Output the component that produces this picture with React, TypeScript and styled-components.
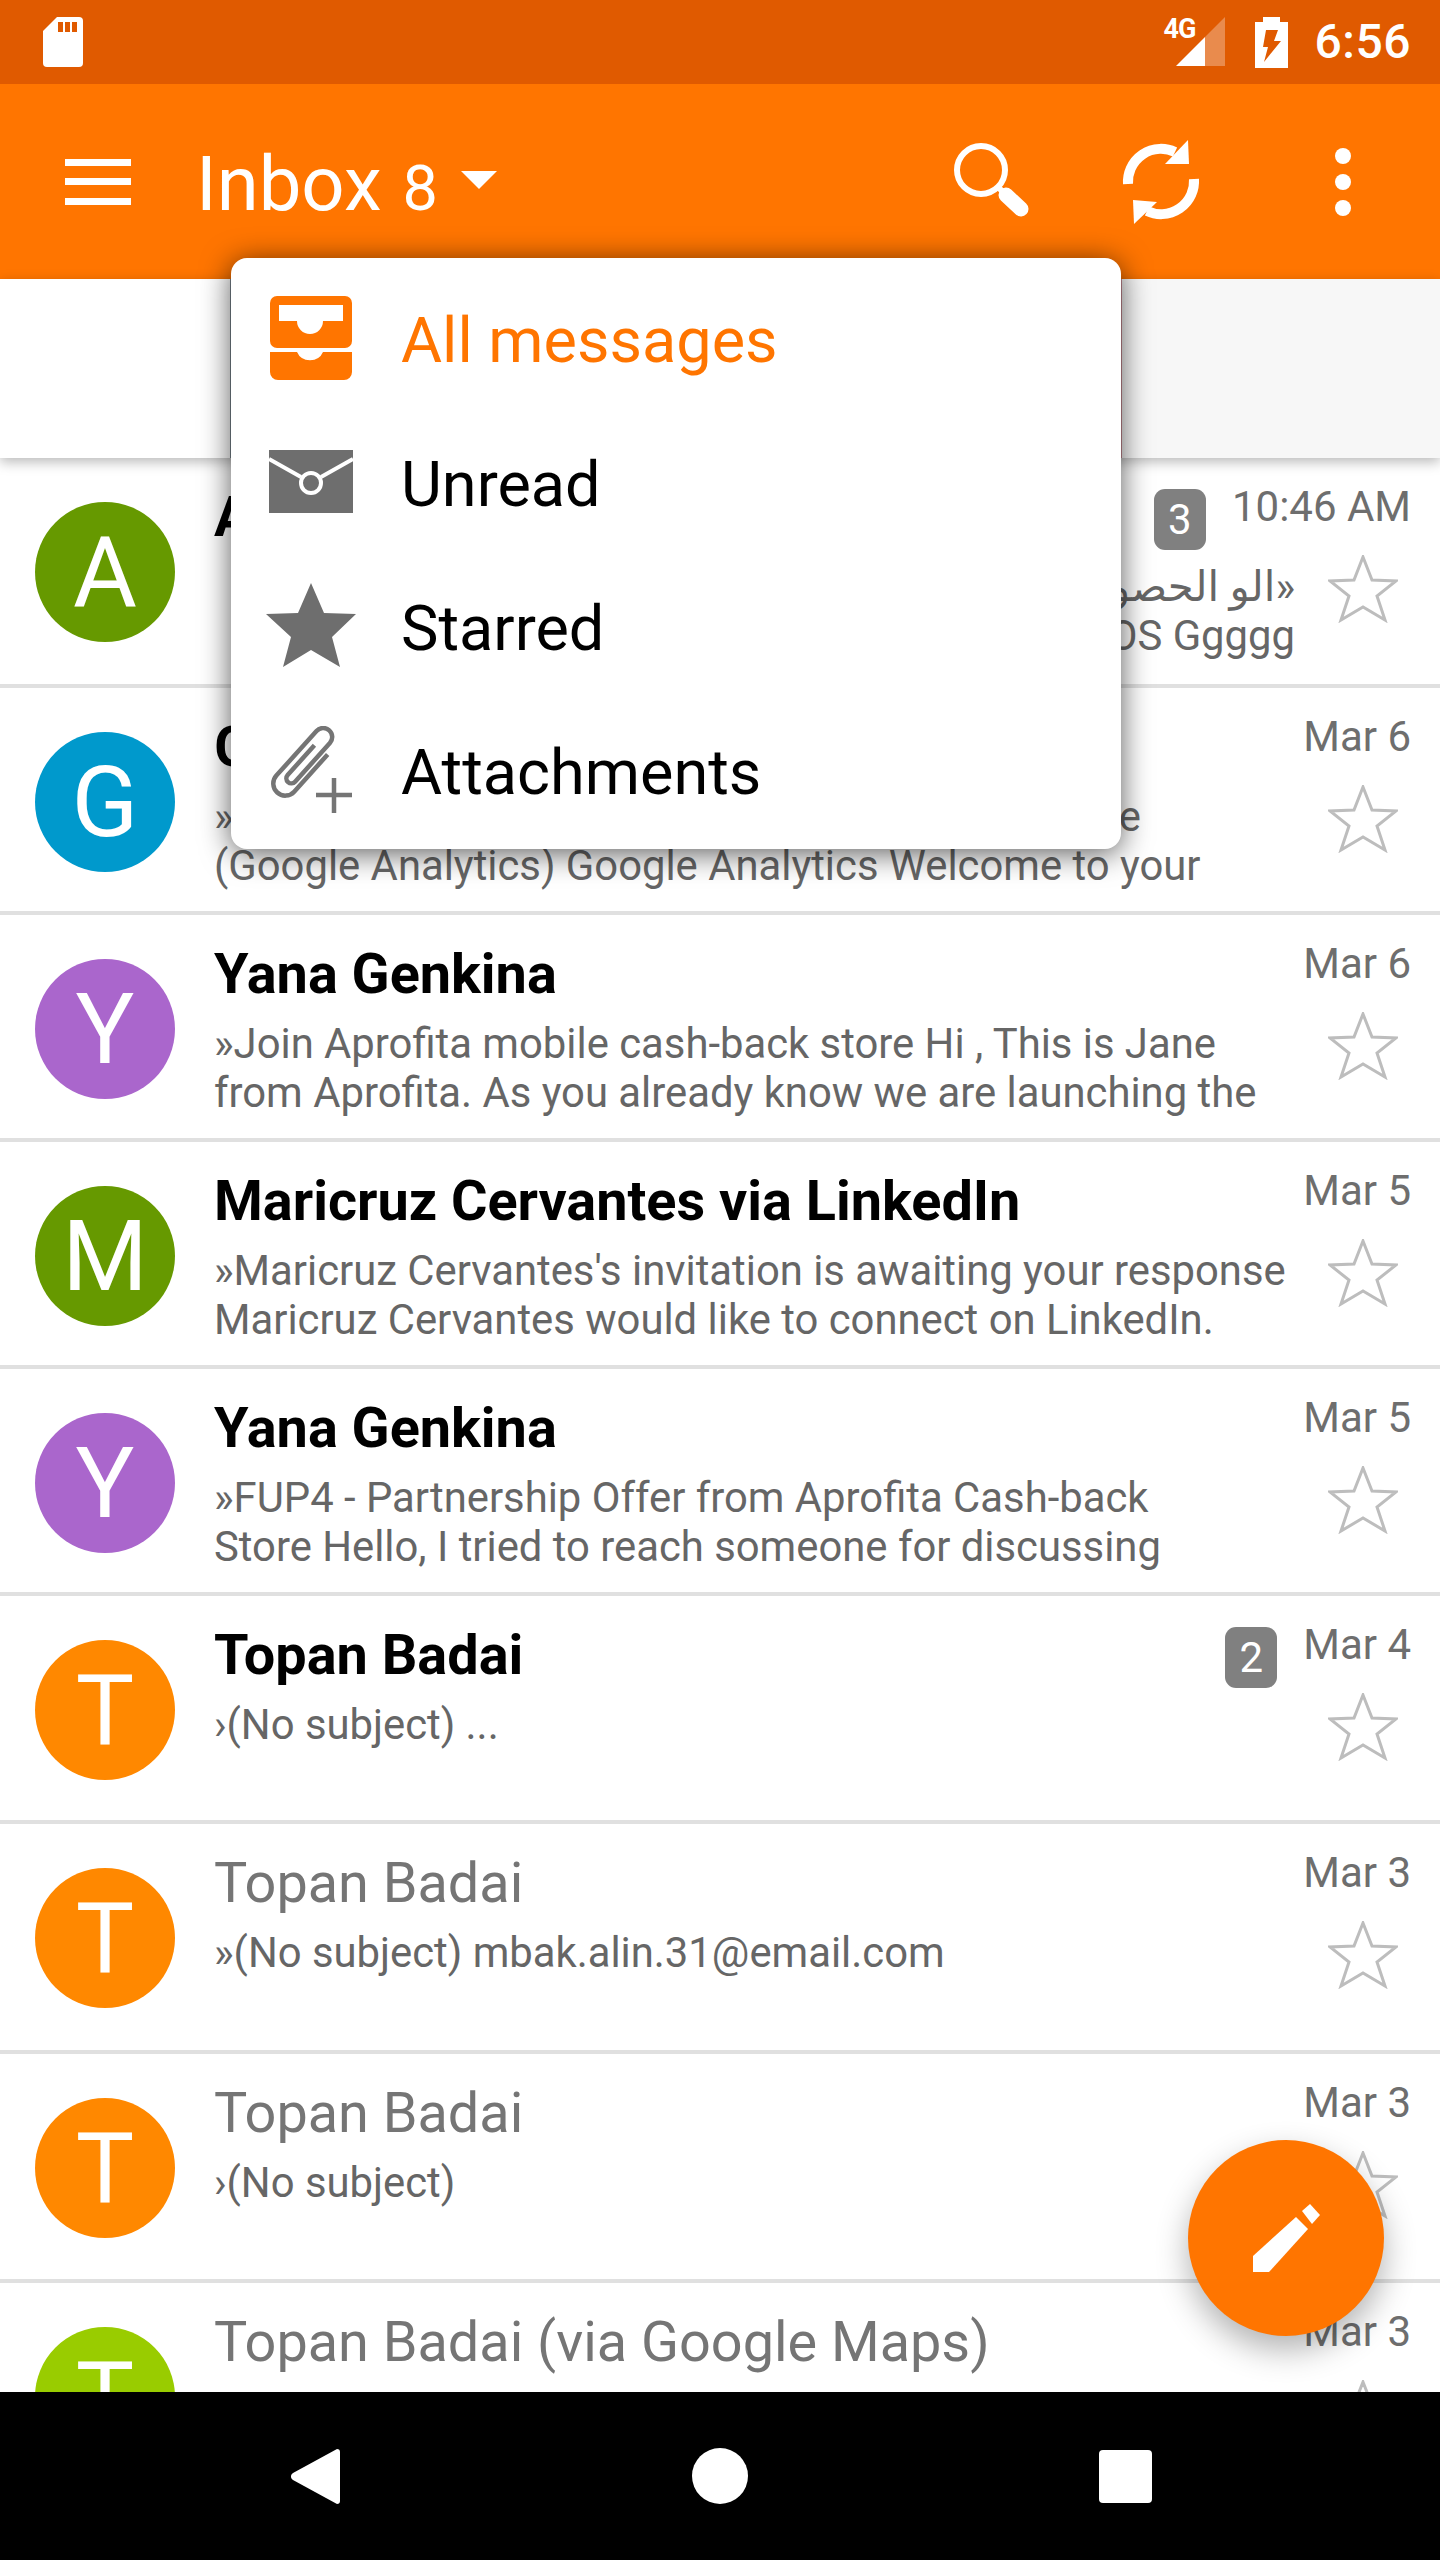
import styled, { createGlobalStyle } from 'styled-components';

const ORANGE = '#ff7500';
const ICON_GREY = '#6e6e6e';

const GlobalStyle = createGlobalStyle`
  html, body {
    margin: 0;
    background: #fff;
  }
  * {
    box-sizing: border-box;
  }
`;

const Screen = styled.div`
  position: relative;
  display: flex;
  flex-direction: column;
  width: 1440px;
  height: 2560px;
  overflow: hidden;
  background: #fff;
  font-family: Roboto, 'DejaVu Sans', sans-serif;
`;

const StatusBar = styled.div`
  display: flex;
  align-items: center;
  justify-content: space-between;
  flex: none;
  height: 84px;
  padding: 0 29px 0 43px;
  background: #e05a00;
  color: #fff;
`;

const StatusRight = styled.div`
  display: flex;
  align-items: center;
`;

const Signal = styled.div`
  position: relative;
  width: 61px;
  height: 50px;
  margin-right: 30px;
  svg {
    display: block;
  }
`;

const NetworkType = styled.span`
  position: absolute;
  left: 0;
  top: -3px;
  font-size: 27px;
  font-weight: 700;
  letter-spacing: -1px;
  line-height: 30px;
`;

const Clock = styled.span`
  margin-left: 27px;
  font-size: 48px;
  font-weight: 500;
  letter-spacing: 0.5px;
  line-height: 84px;
`;

const AppBar = styled.header`
  display: flex;
  align-items: center;
  flex: none;
  height: 195px;
  padding-left: 65px;
  background: ${ORANGE};
  color: #fff;
`;

const Hamburger = styled.div`
  display: flex;
  flex-direction: column;
  justify-content: space-between;
  width: 66px;
  height: 46px;
  span {
    height: 7px;
    background: #fff;
  }
`;

const Title = styled.div`
  display: flex;
  align-items: baseline;
  margin: 9px 0 0 65px;
  font-size: 76px;
  line-height: 90px;
`;

const Count = styled.span`
  margin-left: 21px;
  font-size: 63px;
`;

const Caret = styled.div`
  width: 0;
  height: 0;
  margin-left: 23px;
  border-left: 18px solid transparent;
  border-right: 18px solid transparent;
  border-top: 18px solid #fff;
  transform: translateY(-21px);
`;

const AppBarActions = styled.div`
  display: flex;
  align-items: center;
  margin-left: auto;
  svg {
    display: block;
  }
`;

const SearchIcon = styled.svg`
  margin-right: 86px;
`;

const SyncIcon = styled.svg`
  margin-right: 132px;
`;

const MoreIcon = styled.svg`
  margin-right: 89px;
`;

const Banner = styled.div`
  position: relative;
  z-index: 1;
  display: flex;
  flex: none;
  height: 179px;
  background: #fff;
  box-shadow: 0 4px 12px rgba(0, 0, 0, 0.28);
`;

const BannerLeft = styled.div`
  width: 231px;
  background: #fff;
  border-right: 1px solid #7c8790;
`;

const BannerRight = styled.div`
  flex: 1;
  margin-left: 889px;
  background: #f7f7f7;
  border-left: 2px solid #c58a92;
`;

const List = styled.main`
  flex: 1;
  min-height: 0;
  overflow: hidden;
`;

const Row = styled.article<{ $height: number }>`
  display: flex;
  height: ${({ $height }) => $height}px;
  padding-right: 29px;
  border-bottom: 4px solid #e0e0e0;
`;

const Avatar = styled.div<{ $color: string }>`
  display: flex;
  align-items: center;
  justify-content: center;
  flex: none;
  width: 140px;
  height: 140px;
  margin: 44px 39px 0 35px;
  border-radius: 50%;
  background: ${({ $color }) => $color};
  color: #fff;
  font-size: 98px;
  font-weight: 400;
`;

const Body = styled.div`
  flex: 1;
  min-width: 0;
  padding-top: 17px;
`;

const TopLine = styled.div`
  display: flex;
  align-items: flex-start;
`;

const Sender = styled.div<{ $unread: boolean }>`
  flex: 1;
  min-width: 0;
  overflow: hidden;
  white-space: nowrap;
  font-size: 55.8px;
  line-height: 84px;
  font-weight: ${({ $unread }) => ($unread ? 700 : 400)};
  color: ${({ $unread }) => ($unread ? '#000' : '#757575')};
`;

const Badge = styled.span`
  display: flex;
  align-items: center;
  justify-content: center;
  flex: none;
  width: 52px;
  height: 61px;
  margin: 14px 26px 0 0;
  border-radius: 11px;
  background: #808080;
  color: #fff;
  font-size: 42px;
`;

const DateText = styled.span`
  flex: none;
  font-size: 42px;
  line-height: 64px;
  color: #6e6e6e;
`;

const BottomLine = styled.div`
  display: flex;
  align-items: flex-start;
  margin-top: 3px;
`;

const Preview = styled.p<{ $rtl?: boolean }>`
  flex: 1;
  min-width: 0;
  height: 98px;
  margin: 0;
  overflow: hidden;
  white-space: pre;
  font-size: 41.8px;
  line-height: 49px;
  color: #666;
  text-align: ${({ $rtl }) => ($rtl ? 'right' : 'left')};
`;

const Star = styled.svg`
  flex: none;
  margin: -7px 13px 0 33px;
`;

const Menu = styled.nav`
  position: absolute;
  z-index: 2;
  left: 231px;
  top: 258px;
  width: 890px;
  height: 591px;
  padding-top: 10px;
  border-radius: 16px;
  background: #fff;
  box-shadow: 0 4px 30px rgba(0, 0, 0, 0.65);
`;

const MenuItem = styled.div<{ $active?: boolean }>`
  display: flex;
  align-items: center;
  height: 144px;
  font-size: 63px;
  color: ${({ $active }) => ($active ? ORANGE : '#000')};
`;

const MenuIcon = styled.div`
  display: flex;
  align-items: center;
  justify-content: center;
  flex: none;
  width: 170px;
  margin-bottom: 5px;
  padding-right: 10px;
`;

const Fab = styled.button`
  position: absolute;
  z-index: 2;
  left: 1188px;
  top: 2140px;
  display: flex;
  align-items: center;
  justify-content: center;
  width: 196px;
  height: 196px;
  padding: 0;
  border: 0;
  border-radius: 50%;
  background: ${ORANGE};
  box-shadow: 0 14px 32px rgba(0, 0, 0, 0.3);
`;

const NavBar = styled.footer`
  position: relative;
  z-index: 1;
  display: flex;
  align-items: center;
  justify-content: space-between;
  flex: none;
  height: 168px;
  padding: 0 288px 0 291px;
  background: #000;
`;

const NavBack = styled.svg`
  display: block;
`;

const NavHome = styled.div`
  width: 56px;
  height: 56px;
  border-radius: 50%;
  background: #fff;
`;

const NavRecents = styled.div`
  width: 53px;
  height: 53px;
  border-radius: 4px;
  background: #fff;
`;

const messages = [
  {
    letter: 'A', color: '#669900', sender: 'Ahmed', unread: true, date: '10:46 AM', badge: 3, rtl: true, height: 230,
    preview: 'الو الحصول على خدمة\u00bb\niOS Ggggg',
  },
  {
    letter: 'G', color: '#0099cc', sender: 'Google Analytics', unread: true, date: 'Mar 6', height: 227,
    preview: '»Welcome to Google Analytics, Thanks for the use\n(Google Analytics) Google Analytics Welcome to your',
  },
  {
    letter: 'Y', color: '#aa66cc', sender: 'Yana Genkina', unread: true, date: 'Mar 6', height: 227,
    preview: '»Join Aprofita mobile cash-back store Hi , This is Jane\nfrom Aprofita. As you already know we are launching the',
  },
  {
    letter: 'M', color: '#669900', sender: 'Maricruz Cervantes via LinkedIn', unread: true, date: 'Mar 5', height: 227,
    preview: "»Maricruz Cervantes's invitation is awaiting your response\nMaricruz Cervantes would like to connect on LinkedIn.",
  },
  {
    letter: 'Y', color: '#aa66cc', sender: 'Yana Genkina', unread: true, date: 'Mar 5', height: 227,
    preview: '»FUP4 - Partnership Offer from Aprofita Cash-back\nStore Hello, I tried to reach someone for discussing',
  },
  {
    letter: 'T', color: '#ff8800', sender: 'Topan Badai', unread: true, date: 'Mar 4', badge: 2, height: 228,
    preview: '›(No subject) ...',
  },
  {
    letter: 'T', color: '#ff8800', sender: 'Topan Badai', unread: false, date: 'Mar 3', height: 230,
    preview: '»(No subject) mbak.alin.31@email.com',
  },
  {
    letter: 'T', color: '#ff8800', sender: 'Topan Badai', unread: false, date: 'Mar 3', height: 229,
    preview: '›(No subject)',
  },
  {
    letter: 'T', color: '#99cc00', sender: 'Topan Badai (via Google Maps)', unread: false, date: 'Mar 3', height: 229,
    preview: '',
  },
];

function StarOutline() {
  return (
    <Star width="70" height="68" viewBox="0 0 70 68">
      <polygon
        points="35,2 44,25 68,26 49,41 57,65 35,52 13,65 21,41 2,26 26,25"
        fill="none"
        stroke="#bdbdbd"
        strokeWidth="3"
      />
    </Star>
  );
}

export default function App() {
  return (
    <>
      <GlobalStyle />
      <Screen>
        <StatusBar>
          <svg width="40" height="50" viewBox="0 0 40 50">
            <path d="M14 0H36a4 4 0 0 1 4 4V46a4 4 0 0 1-4 4H4a4 4 0 0 1-4-4V14Z" fill="#fff" />
            <path d="M15 5h5v10h-5zM22 5h5v10h-5zM29 5h5v10h-5z" fill="#e05a00" />
          </svg>
          <StatusRight>
            <Signal>
              <NetworkType>4G</NetworkType>
              <svg width="61" height="50" viewBox="0 0 61 50">
                <polygon points="12,49 41,20 41,49" fill="#fff" />
                <polygon points="41,20 61,0 61,49 41,49" fill="#fff" opacity="0.3" />
              </svg>
            </Signal>
            <svg width="33" height="51" viewBox="0 0 33 51">
              <path d="M8 0H25V5H33V51H0V5H8Z" fill="#fff" />
              <polygon points="11,13 23,13 19,24 26,24 9,45 13,30 8,30" fill="#e05a00" />
            </svg>
            <Clock>6:56</Clock>
          </StatusRight>
        </StatusBar>

        <AppBar>
          <Hamburger>
            <span />
            <span />
            <span />
          </Hamburger>
          <Title>
            Inbox
            <Count>8</Count>
            <Caret />
          </Title>
          <AppBarActions>
            <SearchIcon width="80" height="80" viewBox="0 0 80 80" fill="none" stroke="#fff">
              <circle cx="28" cy="28" r="24" strokeWidth="6" />
              <path d="M45 45L52 52" strokeWidth="6" />
              <path d="M53 53L68 67" strokeWidth="15" strokeLinecap="round" />
            </SearchIcon>
            <SyncIcon width="84" height="92" viewBox="0 0 84 92">
              <g fill="none" stroke="#fff" strokeWidth="10">
                <path d="M9 48A33 33 0 0 1 56 16" />
                <path d="M75 43A33 33 0 0 1 28 75" />
              </g>
              <polygon points="69,4 70,28 46,28" fill="#fff" />
              <polygon points="15,88 14,64 38,66" fill="#fff" />
            </SyncIcon>
            <MoreIcon width="16" height="68" viewBox="0 0 16 68" fill="#fff">
              <circle cx="8" cy="8" r="8" />
              <circle cx="8" cy="34" r="8" />
              <circle cx="8" cy="60" r="8" />
            </MoreIcon>
          </AppBarActions>
        </AppBar>

        <Banner>
          <BannerLeft />
          <BannerRight />
        </Banner>

        <List>
          {messages.map((m, i) => (
            <Row key={i} $height={m.height}>
              <Avatar $color={m.color}>{m.letter}</Avatar>
              <Body>
                <TopLine>
                  <Sender $unread={m.unread}>{m.sender}</Sender>
                  {m.badge && <Badge>{m.badge}</Badge>}
                  <DateText>{m.date}</DateText>
                </TopLine>
                <BottomLine>
                  <Preview $rtl={m.rtl}>{m.preview}</Preview>
                  <StarOutline />
                </BottomLine>
              </Body>
            </Row>
          ))}
        </List>

        <Menu>
          <MenuItem $active>
            <MenuIcon>
              <svg width="82" height="84" viewBox="0 0 82 84">
                <rect width="82" height="52" rx="7" fill={ORANGE} />
                <path d="M9 9H73V25H53A13 13 0 0 1 27 25H9Z" fill="#fff" />
                <path
                  d="M0 56H27A14 13 0 0 0 53 56H82V76a8 8 0 0 1-8 8H8a8 8 0 0 1-8-8Z"
                  fill={ORANGE}
                />
              </svg>
            </MenuIcon>
            All messages
          </MenuItem>
          <MenuItem>
            <MenuIcon>
              <svg width="84" height="63" viewBox="0 0 84 63">
                <rect width="84" height="63" fill={ICON_GREY} />
                <path d="M0 9L32 27M84 9L52 27" stroke="#fff" strokeWidth="4" fill="none" />
                <circle cx="42" cy="33" r="10" fill={ICON_GREY} stroke="#fff" strokeWidth="4" />
              </svg>
            </MenuIcon>
            Unread
          </MenuItem>
          <MenuItem>
            <MenuIcon>
              <svg width="91" height="85" viewBox="0 0 91 85">
                <polygon
                  points="45,0 58,30 90,31 66,54 74,84 45,67 17,84 25,54 0,31 32,30"
                  fill={ICON_GREY}
                />
              </svg>
            </MenuIcon>
            Starred
          </MenuItem>
          <MenuItem>
            <MenuIcon>
              <svg width="85" height="87" viewBox="0 0 85 87" fill="none" stroke="#757575" strokeWidth="4.5">
                <g transform="translate(-2 60) rotate(-48)">
                  <path d="M64 24H14A12 12 0 0 1 14 0H74A9 9 0 0 1 74 18H22A4 4 0 0 1 22 8H62" />
                </g>
                <path d="M65 52V87M47 69H83" />
              </svg>
            </MenuIcon>
            Attachments
          </MenuItem>
        </Menu>

        <Fab>
          <svg width="67" height="68" viewBox="0 0 67 68" fill="#fff">
            <polygon points="0,52 43,13 55,25 16,68 0,68" />
            <polygon points="49,7 57,0 67,11 59,20" />
          </svg>
        </Fab>

        <NavBar>
          <NavBack width="49" height="57" viewBox="0 0 49 57">
            <path d="M46 1a3 3 0 0 1 3 3V53a3 3 0 0 1-3 3L2 32a4 4 0 0 1 0-7Z" fill="#fff" />
          </NavBack>
          <NavHome />
          <NavRecents />
        </NavBar>
      </Screen>
    </>
  );
}
